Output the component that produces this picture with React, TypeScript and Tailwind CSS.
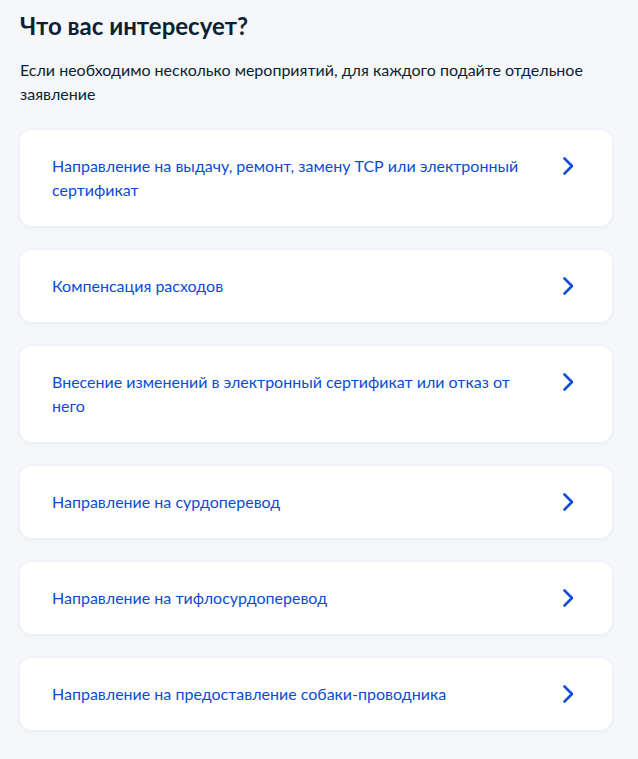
export default function App() {
  const items = [
    "Направление на выдачу, ремонт, замену ТСР или электронный сертификат",
    "Компенсация расходов",
    "Внесение изменений в электронный сертификат или отказ от него",
    "Направление на сурдоперевод",
    "Направление на тифлосурдоперевод",
    "Направление на предоставление собаки-проводника",
  ];

  return (
    <div className="min-h-[759px] bg-[#f5f7fb] pl-5 pr-[26px] pt-[10px] pb-6 font-['Lato','Liberation_Sans',sans-serif]">
      <h1 className="text-[24px] leading-8 font-bold text-[#0b1f33]">Что вас интересует?</h1>
      <p className="mt-4 text-[16px] leading-6 text-[#0b1f33]">
        Если необходимо несколько мероприятий, для каждого подайте отдельное заявление
      </p>

      <div className="mt-6 flex flex-col gap-6">
        {items.map((item, i) => (
          <button
            key={i}
            className="flex items-start gap-6 rounded-xl bg-white px-8 py-6 text-left shadow-[0_1px_4px_rgba(28,56,112,0.08)]"
          >
            <span className="flex-1 text-[16px] leading-6 text-[#0d4cd3]">{item}</span>
            <svg width="24" height="24" viewBox="0 0 24 24" fill="none" className="shrink-0">
              <path
                d="M8.5 4.5 16 12l-7.5 7.5"
                stroke="#0d4cd3"
                strokeWidth="2.6"
                strokeLinecap="round"
                strokeLinejoin="round"
              />
            </svg>
          </button>
        ))}
      </div>
    </div>
  );
}
